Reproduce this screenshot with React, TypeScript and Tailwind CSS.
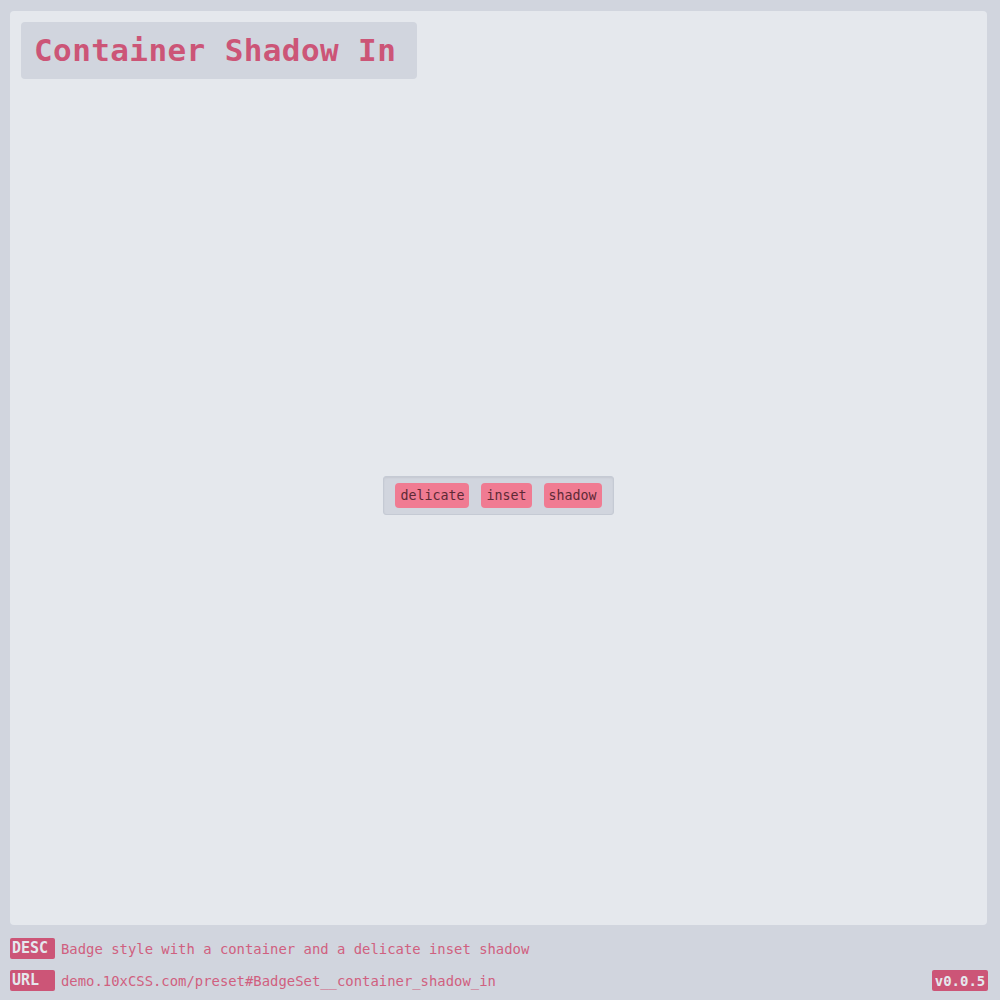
const MONO = { fontFamily: '"DejaVu Sans Mono", "Liberation Mono", monospace' };

const BADGES = ["delicate", "inset", "shadow"];

export default function App() {
    return (
        <div className="w-[1000px] h-[1000px] bg-[#d1d5de] overflow-hidden" style={MONO}>
            {/* Main panel */}
            <div className="ml-[10px] mt-[11px] w-[977px] h-[914px] bg-[#e5e8ed] rounded-[4px] pt-[11px] pl-[11px]">
                <div className="w-[396px] h-[57px] bg-[#d1d5de] rounded-[4px] flex items-center pl-[13px]">
                    <h1 className="text-[31px] font-semibold text-[#cc5577] leading-none tracking-[0.4px]">
                        Container Shadow In
                    </h1>
                </div>

                {/* Badge set */}
                <div className="flex justify-center mt-[397px] pr-[11px]">
                    <div className="flex gap-[12px] px-[11px] py-[6px] bg-[#d1d5de] rounded-[3px] border border-[#c5cad4] shadow-[inset_0_1px_2px_rgba(0,0,0,0.06)]">
                        {BADGES.map((badge) => (
                            <span
                                key={badge}
                                className="h-[25px] px-[5px] flex items-center bg-[#f07b92] text-[#5e2a36] text-[13.3px] rounded-[4px]"
                            >
                                {badge}
                            </span>
                        ))}
                    </div>
                </div>
            </div>

            {/* Footer */}
            <div className="px-[10px] pt-[13px]">
                <div className="flex items-center gap-[6px] h-[21px]">
                    <span className="h-[21px] w-[45px] px-[2px] flex items-center bg-[#cc5577] text-[#e5e8ed] text-[15px] font-bold rounded-[2px] leading-none">
                        DESC
                    </span>
                    <span className="text-[13.9px] text-[#d0607f] pt-[2px]">
                        Badge style with a container and a delicate inset shadow
                    </span>
                </div>
                <div className="flex items-center justify-between h-[21px] mt-[11px]">
                    <div className="flex items-center gap-[6px]">
                        <span className="h-[21px] w-[45px] px-[2px] flex items-center bg-[#cc5577] text-[#e5e8ed] text-[15px] font-bold rounded-[2px] leading-none">
                            URL
                        </span>
                        <span className="text-[13.9px] text-[#d0607f] pt-[2px]">
                            demo.10xCSS.com/preset#BadgeSet__container_shadow_in
                        </span>
                    </div>
                    <span className="h-[21px] w-[56px] mr-[2px] flex items-center justify-center bg-[#cc5577] text-[#e5e8ed] text-[14px] font-bold rounded-[2px] leading-none">
                        v0.0.5
                    </span>
                </div>
            </div>
        </div>
    );
}
